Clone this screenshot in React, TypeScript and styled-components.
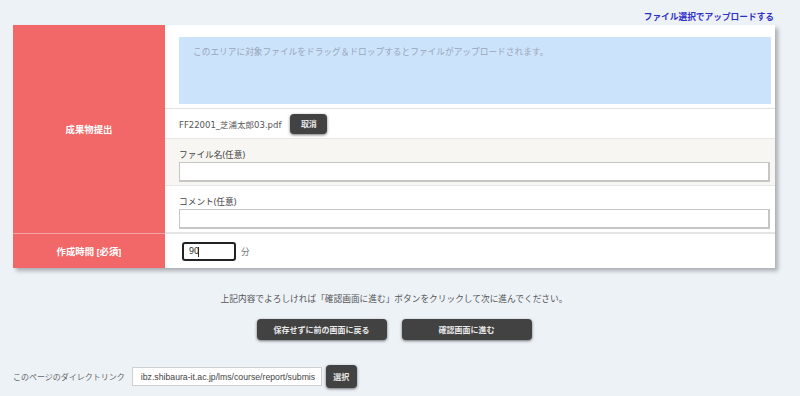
import React from "react";
import styled, { createGlobalStyle } from "styled-components";

const GlobalStyle = createGlobalStyle`
  html, body {
    margin: 0;
    padding: 0;
    background: #edf2f7;
  }
  body {
    font-family: "Noto Sans", "Noto Sans CJK JP", sans-serif;
    font-size: 8.7px;
    color: #555;
  }
  * { box-sizing: border-box; }
`;

const Page = styled.div`
  width: 800px;
  height: 396px;
  padding: 0 25px 0 13px;
  overflow: hidden;
`;

const TopLinkBar = styled.div`
  height: 25px;
  display: flex;
  justify-content: flex-end;
  align-items: flex-end;
  padding-bottom: 1px;
`;

const TopLink = styled.a`
  color: #2f2fc8;
  font-weight: 700;
  font-size: 8.7px;
  text-decoration: none;
  line-height: 13px;
  margin-right: 1px;
`;

const Table = styled.div`
  display: grid;
  grid-template-columns: 152px 1fr;
  background: #fff;
  box-shadow: 3px 3px 4px rgba(0, 0, 0, 0.28);
`;

const HeadCell = styled.div<{ $last?: boolean }>`
  background: #f26868;
  color: #fff;
  font-weight: 700;
  font-size: 9.4px;
  display: flex;
  align-items: center;
  justify-content: center;
  border-bottom: ${(p) => (p.$last ? "none" : "1px solid #f5a5a5")};
`;

const DataCell = styled.div<{ $last?: boolean }>`
  display: flex;
  flex-direction: column;
  border-bottom: ${(p) => (p.$last ? "none" : "1px solid #e3e3e3")};
`;

const DropWrap = styled.div`
  padding: 12px 4px 4px 14px;
  border-bottom: 1px solid #e2e2e2;
`;

const DropArea = styled.div`
  height: 67px;
  background: #cce3fc;
  color: #9aa6b8;
  padding: 8px 14px;
  line-height: 14px;
`;

const FileRow = styled.div`
  height: 30px;
  display: flex;
  align-items: center;
  gap: 9px;
  padding-left: 14px;
  border-bottom: 1px solid #e6e6e6;
  color: #555;
`;

const FileName = styled.span`
  font-family: "DejaVu Sans", "Noto Sans CJK JP", sans-serif;
  font-size: 8.5px;
`;

const DarkButton = styled.button<{ $w: number; $h: number }>`
  width: ${(p) => p.$w}px;
  height: ${(p) => p.$h}px;
  background: #424242;
  color: #e8e8e8;
  border: none;
  border-radius: 4px;
  box-shadow: 0 1px 3px rgba(0, 0, 0, 0.55);
  font-family: "Noto Sans CJK JP", sans-serif;
  font-size: 8px;
  font-weight: 700;
  padding: 0;
  display: flex;
  align-items: center;
  justify-content: center;
  cursor: pointer;
`;

const FieldSection = styled.div<{ $bg: string }>`
  background: ${(p) => p.$bg};
  padding: 9px 5px 3px 14px;
  border-bottom: 1px solid #e6e6e6;
  display: flex;
  flex-direction: column;
`;

const FieldLabel = styled.div`
  line-height: 14px;
  height: 14px;
  color: #444;
`;

const TextInput = styled.input`
  height: 20px;
  width: 100%;
  border: 1px solid #c6c6c6;
  border-width: 1px 2px 2px 1px;
  background: #fff;
  outline: none;
  margin: 0;
`;

const TimeCell = styled.div`
  height: 34px;
  display: flex;
  align-items: center;
  gap: 5px;
  padding-left: 17px;
  color: #777;
`;

const TimeInput = styled.input`
  width: 54px;
  height: 19px;
  border: 2px solid #222;
  border-radius: 3px;
  padding: 0 5px;
  font-family: "Noto Sans", sans-serif;
  font-size: 8.7px;
  color: #222;
  outline: none;
`;

const Caret = styled.span`
  display: inline-block;
  width: 1px;
  height: 10px;
  background: #222;
`;

const TimeBox = styled.div`
  position: relative;
  display: flex;
`;

const CaretSpot = styled.div`
  position: absolute;
  left: 16px;
  top: 5px;
  display: flex;
`;

const Notice = styled.div`
  margin-top: 24px;
  line-height: 14px;
  text-align: center;
  color: #555;
`;

const ButtonRow = styled.div`
  margin-top: 13px;
  display: flex;
  justify-content: center;
  gap: 15px;
`;

const LinkRow = styled.div`
  margin-top: 25px;
  display: flex;
  align-items: center;
`;

const LinkLabel = styled.span`
  font-size: 8px;
  color: #666;
  margin-right: 7px;
`;

const UrlInput = styled.input`
  width: 190px;
  height: 19px;
  border: 1px solid #cfcfcf;
  background: #fff;
  padding: 0 6px 0 8px;
  font-family: "Liberation Sans", Arial, sans-serif;
  font-size: 8.7px;
  color: #444;
  margin-right: 4px;
  outline: none;
`;

export default function App() {
  return (
    <>
      <GlobalStyle />
      <Page>
        <TopLinkBar>
          <TopLink href="#">ファイル選択でアップロードする</TopLink>
        </TopLinkBar>
        <Table>
          <HeadCell>成果物提出</HeadCell>
          <DataCell>
            <DropWrap>
              <DropArea>
                このエリアに対象ファイルをドラッグ＆ドロップするとファイルがアップロードされます。
              </DropArea>
            </DropWrap>
            <FileRow>
              <FileName>FF22001_芝浦太郎03.pdf</FileName>
              <DarkButton $w={37} $h={20}>取消</DarkButton>
            </FileRow>
            <FieldSection $bg="#f7f6f2">
              <FieldLabel>ファイル名(任意)</FieldLabel>
              <TextInput />
            </FieldSection>
            <FieldSection $bg="#ffffff">
              <FieldLabel>コメント(任意)</FieldLabel>
              <TextInput />
            </FieldSection>
          </DataCell>
          <HeadCell $last>作成時間 [必須]</HeadCell>
          <DataCell $last>
            <TimeCell>
              <TimeBox>
                <TimeInput defaultValue="90" />
                <CaretSpot>
                  <Caret />
                </CaretSpot>
              </TimeBox>
              <span>分</span>
            </TimeCell>
          </DataCell>
        </Table>
        <Notice>
          上記内容でよろしければ「確認画面に進む」ボタンをクリックして次に進んでください。
        </Notice>
        <ButtonRow>
          <DarkButton $w={130} $h={21}>保存せずに前の画面に戻る</DarkButton>
          <DarkButton $w={130} $h={21}>確認画面に進む</DarkButton>
        </ButtonRow>
        <LinkRow>
          <LinkLabel>このページのダイレクトリンク</LinkLabel>
          <UrlInput readOnly defaultValue="ibz.shibaura-it.ac.jp/lms/course/report/submission" />
          <DarkButton $w={31} $h={23}>選択</DarkButton>
        </LinkRow>
      </Page>
    </>
  );
}
